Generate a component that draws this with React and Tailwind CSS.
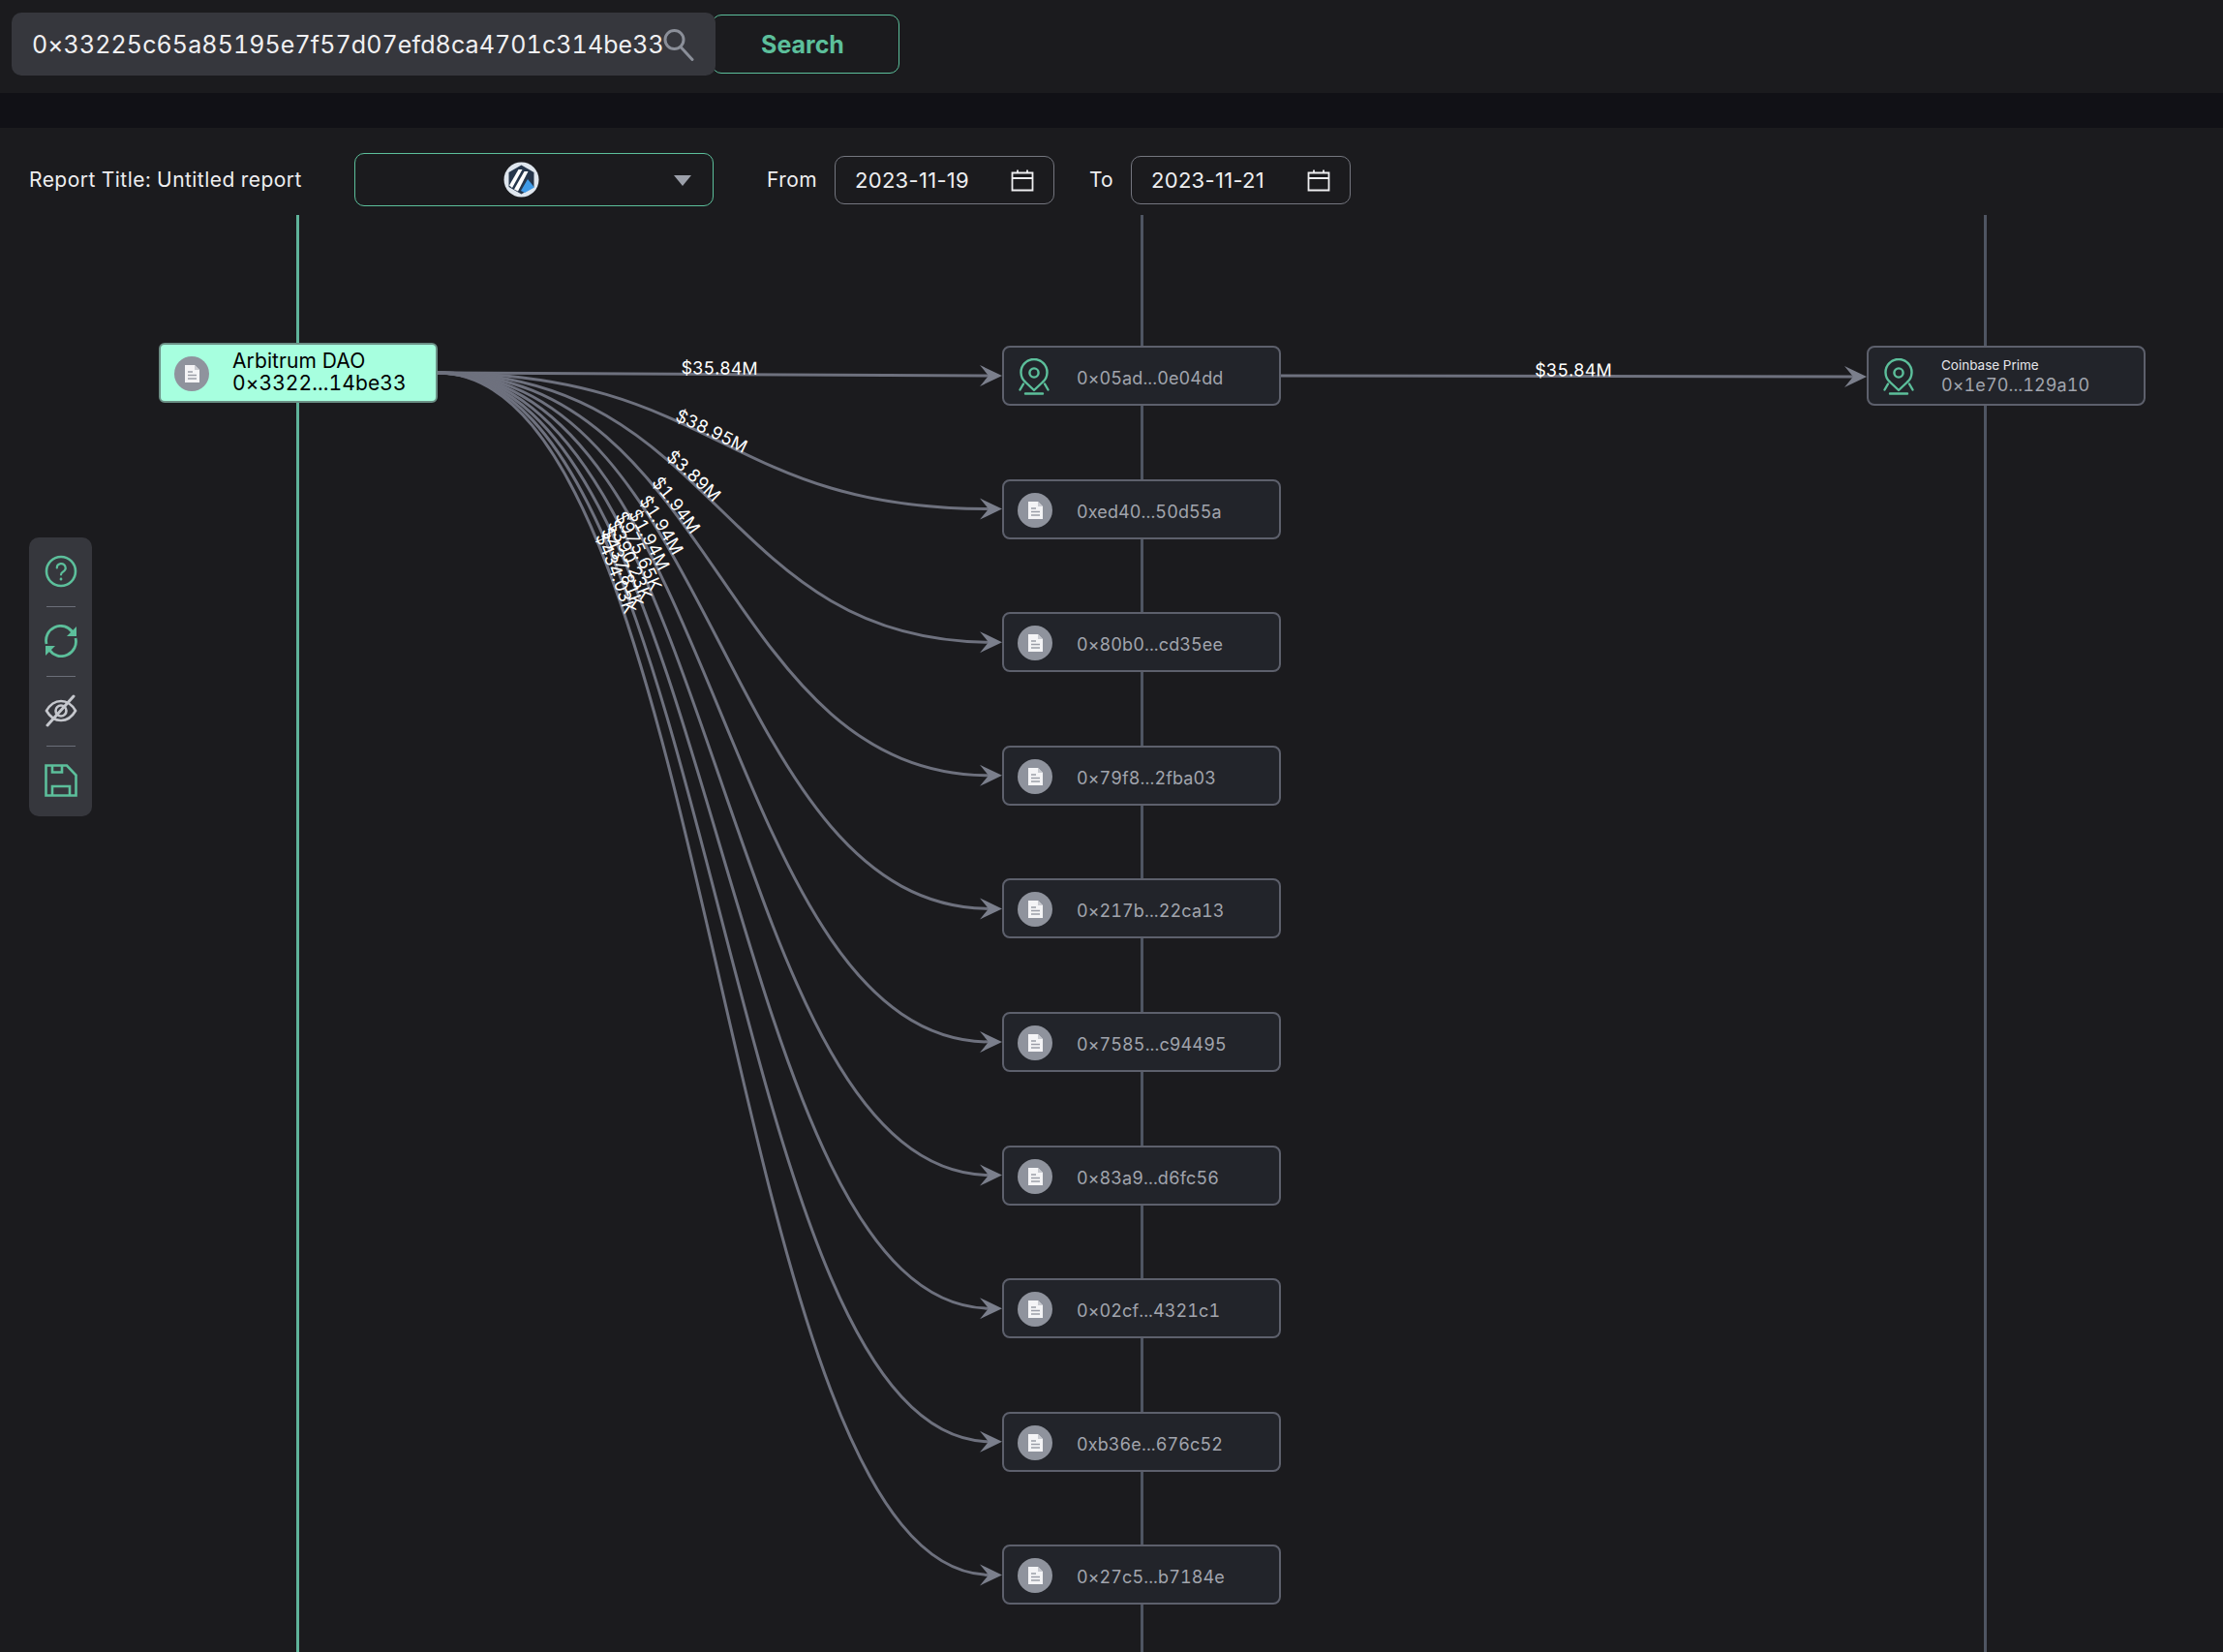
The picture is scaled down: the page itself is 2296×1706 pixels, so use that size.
const font = { fontFamily: 'Inter, "Noto Sans", sans-serif' };

const middleNodes = [
  { address: '0×05ad...0e04dd', label: '$35.84M', kind: 'pin' },
  { address: '0xed40...50d55a', label: '$38.95M', kind: 'doc' },
  { address: '0×80b0...cd35ee', label: '$3.89M', kind: 'doc' },
  { address: '0×79f8...2fba03', label: '$1.94M', kind: 'doc' },
  { address: '0×217b...22ca13', label: '$1.94M', kind: 'doc' },
  { address: '0×7585...c94495', label: '$1.94M', kind: 'doc' },
  { address: '0×83a9...d6fc56', label: '$975.65K', kind: 'doc' },
  { address: '0×02cf...4321c1', label: '$390.23K', kind: 'doc' },
  { address: '0xb36e...676c52', label: '$437.81K', kind: 'doc' },
  { address: '0×27c5...b7184e', label: '$434.03K', kind: 'doc' },
];

// canvas starts 222px down the page
const nodeTop = (i) => 135 + i * 137.6;
const nodeMid = (i) => nodeTop(i) + 31;

function DocIcon() {
  return (
    <div className="w-[36px] h-[36px] rounded-full bg-[#8f939d] flex items-center justify-center shrink-0">
      <svg width="15" height="18" viewBox="0 0 15 18">
        <path d="M0 0H10L15 5V18H0Z" fill="#f4f4f6" />
        <path d="M10 0L15 5H10Z" fill="#c9cbd1" />
        <path d="M3 7H8M3 10.5H12M3 14H12" stroke="#9b9ea8" strokeWidth="1.3" />
      </svg>
    </div>
  );
}

function PinIcon() {
  return (
    <svg width="34" height="38" viewBox="0 0 34 38" fill="none" stroke="#5cbf9b" strokeWidth="2.4" className="shrink-0">
      <path d="M8 24.5 A13.5 13.5 0 1 1 26 24.5 L17 33 Z" strokeLinejoin="round" />
      <circle cx="17" cy="15" r="4.6" />
      <path d="M2.5 32.5L6 26.5M31.5 32.5L28 26.5M8 36.5H26" strokeLinecap="round" />
    </svg>
  );
}

function ArbitrumLogo() {
  return (
    <svg width="37" height="37" viewBox="0 0 37 37">
      <circle cx="18.5" cy="18.5" r="18" fill="#dfe6ee" />
      <path d="M18.5 3.5L31.5 11V26L18.5 33.5L5.5 26V11Z" fill="#26364b" />
      <path d="M6 24.5L15.5 8H19.5L9 27Z" fill="#ffffff" />
      <path d="M11 28.5L21.5 10H25.5L15 30.5Z" fill="#ffffff" />
      <path d="M18 30L25 18L32 26.5L22 32Z" fill="#3f9be8" />
    </svg>
  );
}

function CalendarIcon() {
  return (
    <svg width="24" height="23" viewBox="0 0 24 23" fill="none" stroke="#eeeef0" strokeWidth="1.8">
      <path d="M1.5 3.5H22.5V21.5H1.5Z" />
      <path d="M1.5 9H22.5M7 0.5V4M17 0.5V4" />
    </svg>
  );
}

function Edges() {
  const sourceX = 452;
  const sourceY = 163;
  const targetX = 1035;
  return (
    <svg className="absolute inset-0 w-full h-full" style={font}>
      <defs>
        {middleNodes.map((n, i) => {
          const y = nodeMid(i);
          return (
            <path
              key={i}
              id={`edge-${i}`}
              d={`M${sourceX} ${sourceY} C${(sourceX + targetX) / 2} ${sourceY} ${(sourceX + targetX) / 2} ${y} ${targetX - 12} ${y}`}
            />
          );
        })}
        <path id="edge-right" d={`M1323 ${nodeMid(0)} L1916 ${nodeMid(0) + 1}`} />
      </defs>
      {middleNodes.map((n, i) => (
        <g key={i}>
          <use href={`#edge-${i}`} fill="none" stroke="#6e717e" strokeWidth="3" />
          <polygon
            points={`${targetX},${nodeMid(i)} ${targetX - 23},${nodeMid(i) - 11} ${targetX - 14},${nodeMid(i)} ${targetX - 23},${nodeMid(i) + 11}`}
            fill="#7b7f8c"
          />
          <text fill="#ffffff" fontSize="18">
            <textPath href={`#edge-${i}`} startOffset="291" textAnchor="middle">{n.label}</textPath>
          </text>
        </g>
      ))}
      <use href="#edge-right" fill="none" stroke="#6e717e" strokeWidth="3" />
      <polygon points={`1928,${nodeMid(0) + 1} 1905,${nodeMid(0) - 10} 1914,${nodeMid(0) + 1} 1905,${nodeMid(0) + 12}`} fill="#7b7f8c" />
      <text fill="#ffffff" fontSize="18">
        <textPath href="#edge-right" startOffset="302" textAnchor="middle">$35.84M</textPath>
      </text>
    </svg>
  );
}

function Toolbar() {
  return (
    <div className="absolute left-[30px] top-[333px] w-[65px] h-[288px] rounded-[10px] bg-[#36373d] flex flex-col items-center pt-[18px]">
      <svg width="34" height="34" viewBox="0 0 34 34" fill="none" stroke="#5cbf9b" strokeWidth="2.6" strokeLinecap="round">
        <circle cx="17" cy="17" r="15" />
        <path d="M12.8 13.5a4.4 4.4 0 1 1 6.6 3.8c-1.5.9-2.4 1.7-2.4 3.2" strokeWidth="2.2" />
        <path d="M17 24.8v.4" />
      </svg>
      <div className="w-[30px] h-[1px] bg-[#6b6e79] my-[18.5px]" />
      <svg width="34" height="34" viewBox="0 0 34 34" fill="none" stroke="#5cbf9b" strokeWidth="2.8">
        <path d="M2 20A15 15 0 0 1 29 8" />
        <path d="M32 14A15 15 0 0 1 5 26" />
        <path d="M33 2V12H23Z" fill="#5cbf9b" stroke="none" />
        <path d="M1 32V22H11Z" fill="#5cbf9b" stroke="none" />
      </svg>
      <div className="w-[30px] h-[1px] bg-[#6b6e79] my-[18.5px]" />
      <svg width="34" height="34" viewBox="0 0 34 34" fill="none" stroke="#c5c7cd" strokeWidth="2.6" strokeLinecap="round">
        <path d="M2 17C6 10 11 7 17 7s11 3 15 10c-4 7-9 10-15 10S6 24 2 17Z" />
        <circle cx="17" cy="17" r="5.5" />
        <path d="M3 32L30 2" strokeWidth="3" />
      </svg>
      <div className="w-[30px] h-[1px] bg-[#6b6e79] my-[18.5px]" />
      <svg width="34" height="34" viewBox="0 0 34 34" fill="none" stroke="#5cbf9b" strokeWidth="2.6">
        <path d="M1.5 1.5H23L32.5 11.5V32.5H1.5Z" />
        <path d="M8 1.5V8.5H18V1.5" />
        <path d="M8 32.5V23H26V32.5" />
      </svg>
    </div>
  );
}

function DateField({ value }) {
  return (
    <div className="w-[227px] h-[50px] rounded-[10px] border border-[#74767f] flex items-center justify-between pl-[20px] pr-[20px] text-[22px] tracking-[0.3px] normal-nums text-[#eeeef0]">
      <span>{value}</span>
      <CalendarIcon />
    </div>
  );
}

export default function App() {
  return (
    <div className="w-full h-[1706px] overflow-hidden flex flex-col bg-[#1b1b1e] text-white tabular-nums" style={font}>
      {/* search */}
      <div className="h-[96px] shrink-0 flex items-start pt-[13px] pl-[12px]">
        <div className="w-[727px] h-[65px] rounded-[10px] bg-[#36373d] flex items-center pl-[21px] relative z-10">
          <span className="text-[25px] text-[#f0f0f2] tracking-[0.1px] w-[652px] pt-[3px] shrink-0 whitespace-nowrap">0×33225c65a85195e7f57d07efd8ca4701c314be33</span>
          <svg width="32" height="34" viewBox="0 0 32 34" fill="none" stroke="#8b8f99" strokeWidth="3" className="shrink-0">
            <circle cx="11.5" cy="12" r="9.5" />
            <path d="M18 19.5L30 32.5" strokeLinecap="round" />
          </svg>
        </div>
        <button className="w-[194px] h-[61px] mt-[2px] -ml-[4px] pr-[6px] pt-[2px] rounded-[10px] border border-[#5cbf9b] text-[25px] font-bold text-[#5cbf9b]">
          Search
        </button>
      </div>
      <div className="h-[36px] shrink-0 bg-[#111116]" />

      {/* report options */}
      <div className="h-[90px] shrink-0 flex items-start pt-[26px] pl-[30px] text-[21px] text-[#eeeef0]">
        <div className="w-[336px] h-[55px] flex items-center tracking-[0.45px]">Report Title: Untitled report</div>
        <div className="w-[371px] h-[55px] rounded-[10px] border border-[#5cbf9b] flex items-center justify-center relative">
          <span className="mr-[26px] flex"><ArbitrumLogo /></span>
          <span className="absolute right-[22px] top-[22px] w-0 h-0 border-l-[9px] border-r-[9px] border-t-[11px] border-l-transparent border-r-transparent border-t-[#9ca0aa]" />
        </div>
        <div className="ml-[55px] h-[55px] w-[70px] flex items-center tracking-[0.4px]">From</div>
        <div className="pt-[3px]"><DateField value="2023-11-19" /></div>
        <div className="ml-[36px] h-[55px] w-[43px] flex items-center">To</div>
        <div className="pt-[3px]"><DateField value="2023-11-21" /></div>
      </div>

      {/* flow canvas */}
      <div className="relative flex-1">
        <div className="absolute left-[306px] top-0 bottom-0 w-[3px] bg-[#5fb39a]" />
        <div className="absolute left-[1178px] top-0 bottom-0 w-[3px] bg-[#4f5562]" />
        <div className="absolute left-[2049px] top-0 bottom-0 w-[3px] bg-[#4f5562]" />

        <Edges />

        <div className="absolute left-[164px] top-[132px] w-[288px] h-[62px] rounded-[6px] border-2 border-[#6b8f85] bg-[#a7ffdf] flex items-center pl-[14px] text-black">
          <div className="pt-[2px]"><DocIcon /></div>
          <div className="ml-[24px] text-[21px] leading-[23px] tracking-[0.1px] -mt-[2px]">
            <div>Arbitrum DAO</div>
            <div>0×3322...14be33</div>
          </div>
        </div>

        {middleNodes.map((n, i) => (
          <div
            key={n.address}
            className="absolute left-[1035px] w-[288px] h-[62px] rounded-[8px] border-2 border-[#5d606c] bg-[#22242a] flex items-center"
            style={{ top: nodeTop(i) }}
          >
            <div className="w-[75px] flex justify-start pl-[14px] pt-[2px] shrink-0">
              {n.kind === 'pin' ? <PinIcon /> : <DocIcon />}
            </div>
            <span className="text-[18px] tracking-[0.1px] text-[#a1a4ad] pt-[5px]">{n.address}</span>
          </div>
        ))}

        <div className="absolute left-[1928px] top-[135px] w-[288px] h-[62px] rounded-[8px] border-2 border-[#5d606c] bg-[#22242a] flex items-center">
          <div className="w-[75px] flex justify-start pl-[14px] pt-[2px] shrink-0"><PinIcon /></div>
          <div className="pt-[2px]">
            <div className="text-[13.5px] leading-[18px] text-[#e6e6ea]">Coinbase Prime</div>
            <div className="text-[18px] leading-[24px] tracking-[0.1px] text-[#a1a4ad]">0×1e70...129a10</div>
          </div>
        </div>

        <Toolbar />
      </div>
    </div>
  );
}
